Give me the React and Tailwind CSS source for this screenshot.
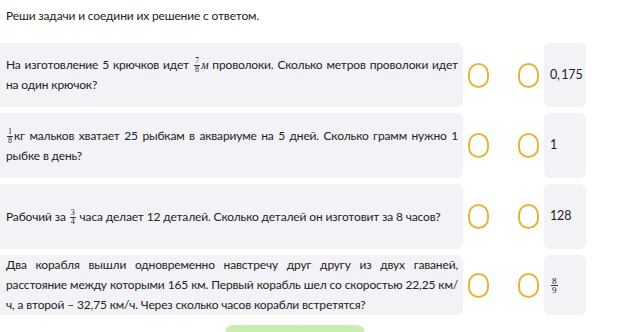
import React from 'react';

const Frac = ({ n, d, className = '' }) => (
	<span className={`inline-flex flex-col items-center align-middle leading-none mx-[1px] font-['Liberation_Serif',serif] text-[8px] tracking-normal ${className}`}>
		<span className="px-[1px] leading-[8px]">{n}</span>
		<span className="w-full h-px bg-[#333]"></span>
		<span className="px-[1px] leading-[8px]">{d}</span>
	</span>
);

const Line = ({ children, justify }) => (
	<div className={`whitespace-nowrap ${justify ? 'text-justify [text-align-last:justify]' : ''}`}>{children}</div>
);

const Ring = () => (
	<div className="w-[21px] h-[25px] rounded-full border-2 border-[#e2b63a]"></div>
);

const rows = [
	{
		h: 'h-[64px]',
		lines: [
			{ j: true, c: <>На изготовление 5 крючков идет <Frac n="7" d="8" /><span className="font-['Liberation_Serif',serif] italic">м</span> проволоки. Сколько метров проволоки идет</> },
			{ c: 'на один крючок?' },
		],
		answer: '0,\u2009175',
	},
	{
		h: 'h-[65px]',
		lines: [
			{ j: true, c: <><Frac n="1" d="8" />кг мальков хватает 25 рыбкам в аквариуме на 5 дней. Сколько грамм нужно 1</> },
			{ c: 'рыбке в день?' },
		],
		answer: '1',
	},
	{
		h: 'h-[65px]',
		lines: [
			{ c: <>Рабочий за <Frac n="3" d="4" /> часа делает 12 деталей. Сколько деталей он изготовит за 8 часов?</> },
		],
		answer: '128',
	},
	{
		h: 'h-[60px]',
		lines: [
			{ j: true, c: 'Два корабля вышли одновременно навстречу друг другу из двух гаваней,' },
			{ j: true, c: 'расстояние между которыми 165 км. Первый корабль шел со скоростью 22,25 км/' },
			{ c: 'ч, а второй – 32,75 км/ч. Через сколько часов корабли встретятся?' },
		],
		answer: <Frac n="8" d="9" className="text-[9px]" />,
	},
];

export default function App() {
	return (
		<div className="w-[625px] h-[332px] overflow-hidden bg-white text-[#222] font-['Lato',sans-serif] text-[12px] tracking-[-0.15px]">
			{/* Heading */}
			<div className="pt-[6px] pl-[6px] leading-[20px]">
				Реши задачи и соедини их решение с ответом.
			</div>

			{/* Task rows */}
			<div className="mt-[17px] flex flex-col gap-[6px]">
				{rows.map((row, i) => (
					<div key={i} className={`flex items-center ${row.h}`}>
						<div className="w-[463px] h-full rounded-r-md bg-[#f3f3f7] pl-[6px] pr-[5px] flex flex-col justify-center leading-[20px]">
							{row.lines.map((l, k) => (
								<Line key={k} justify={l.j}>{l.c}</Line>
							))}
						</div>
						<div className="ml-[5px]"><Ring /></div>
						<div className="ml-[29px]"><Ring /></div>
						<div className="ml-[5px] w-[42px] h-full rounded-md bg-[#f3f3f7] pl-[6px] flex items-center text-[12.5px]">
							{row.answer}
						</div>
					</div>
				))}
			</div>

			{/* Check button */}
			<div className="mt-[10px] ml-[225px] w-[140px] h-[20px] rounded-t-lg bg-[#c8efb0]"></div>
		</div>
	);
}
